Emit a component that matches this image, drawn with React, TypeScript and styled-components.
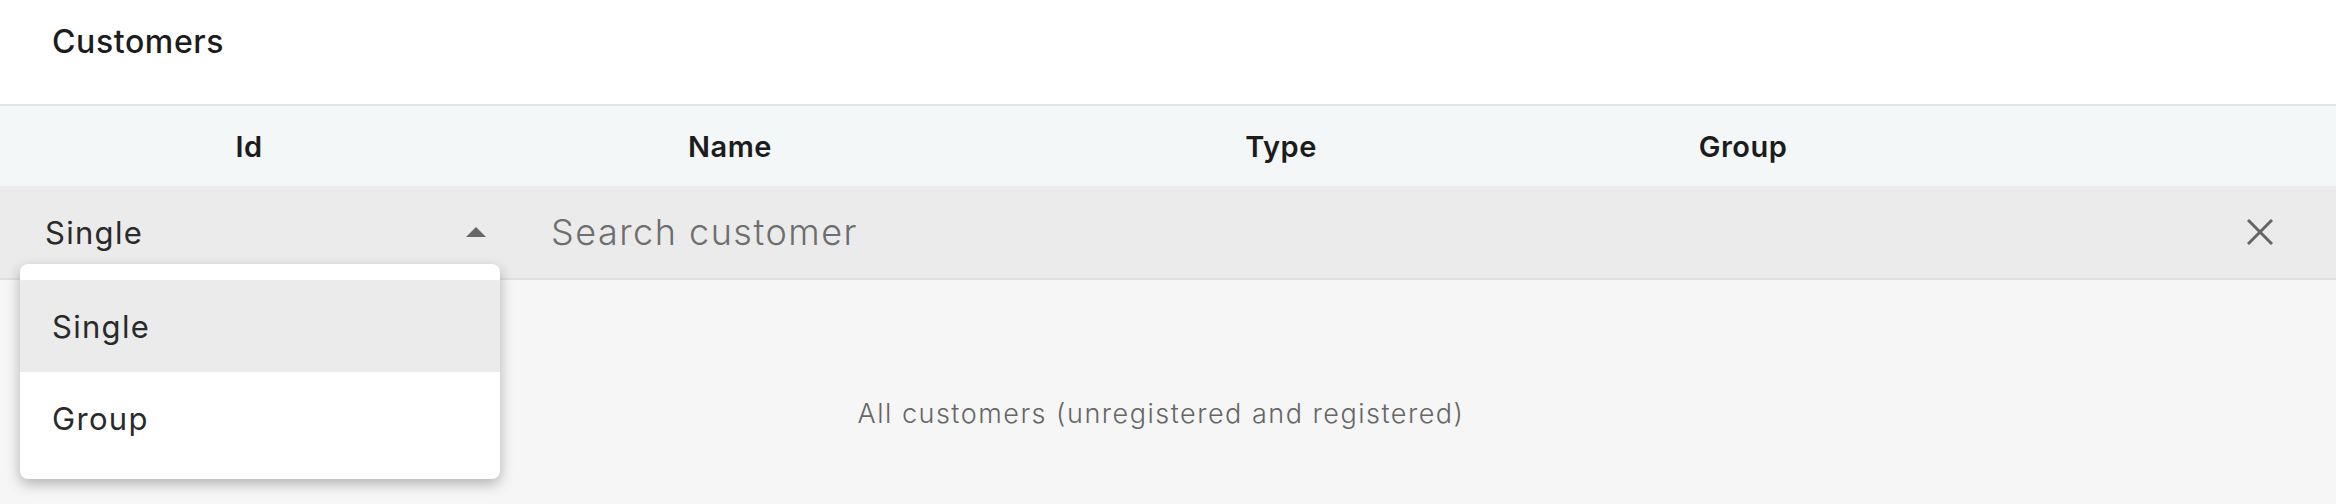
import styled, { createGlobalStyle } from "styled-components";
import { useState } from "react";

const GlobalStyle = createGlobalStyle`
  html, body {
    margin: 0;
    padding: 0;
    background: #ffffff;
    font-family: Inter, "Noto Sans", sans-serif;
    color: #1c1c1c;
  }
  * {
    box-sizing: border-box;
  }
`;

const columns = [
  { label: "Id", width: "498px" },
  { label: "Name", width: "464px" },
  { label: "Type", width: "638px" },
  { label: "Group", width: "286px" },
];

const options = ["Single", "Group"];

const App = () => {
  const [kind, setKind] = useState<string>("Single");
  const [open, setOpen] = useState<boolean>(true);
  const [search, setSearch] = useState<string>("");

  return (
    <Page>
      <GlobalStyle />
      <TitleBar>
        <Title>Customers</Title>
      </TitleBar>
      <HeaderRow cols={columns.map((c) => c.width).join(" ") + " 1fr"}>
        {columns.map((c) => (
          <HeaderCell key={c.label}>{c.label}</HeaderCell>
        ))}
        <span />
      </HeaderRow>
      <SearchRow>
        <SelectBox onClick={() => setOpen(!open)}>
          <SelectValue>{kind}</SelectValue>
          <Arrow up={open} />
          {open && (
            <Menu>
              {options.map((o) => (
                <MenuItem
                  key={o}
                  active={o === kind}
                  onClick={(e: any) => {
                    e.stopPropagation();
                    setKind(o);
                    setOpen(false);
                  }}
                >
                  {o}
                </MenuItem>
              ))}
            </Menu>
          )}
        </SelectBox>
        <SearchInput
          placeholder="Search customer"
          value={search}
          onChange={(e: any) => setSearch(e.target.value)}
        />
        <ClearButton onClick={() => setSearch("")}>
          <svg width="26" height="26" viewBox="0 0 26 26">
            <path d="M1 1 L25 25 M25 1 L1 25" stroke="#666666" strokeWidth="3" />
          </svg>
        </ClearButton>
      </SearchRow>
      <Body>
        <EmptyText>All customers (unregistered and registered)</EmptyText>
      </Body>
    </Page>
  );
};

export default App;

const Page = styled.div`
  width: 100%;
  height: 100vh;
  display: flex;
  flex-direction: column;
  overflow: hidden;
`;

const TitleBar = styled.div`
  height: 106px;
  padding: 22px 0 0 52px;
  background: #ffffff;
  border-bottom: 2px solid #e1e5e7;
`;

const Title = styled.h1`
  margin: 0;
  font-size: 32px;
  line-height: 40px;
  font-weight: 500;
  letter-spacing: 0.6px;
  color: #1c1c1c;
`;

const HeaderRow = styled.div<{ cols: string }>`
  display: grid;
  grid-template-columns: ${(p) => p.cols};
  height: 80px;
  align-items: center;
  background: #f3f7f8;
`;

const HeaderCell = styled.div`
  text-align: center;
  font-size: 29px;
  font-weight: 600;
  letter-spacing: 0.5px;
  color: #1c1c1c;
`;

const SearchRow = styled.div`
  display: flex;
  align-items: center;
  height: 94px;
  background: #ebebeb;
  border-bottom: 2px solid #e0e0e0;
  position: relative;
  z-index: 2;
`;

const SelectBox = styled.div`
  position: relative;
  width: 520px;
  height: 100%;
  display: flex;
  align-items: center;
  padding: 0 34px 0 45px;
  cursor: pointer;
`;

const SelectValue = styled.span`
  flex: 1;
  font-size: 31px;
  letter-spacing: 1.3px;
  color: #2a2a2a;
`;

const Arrow = styled.span<{ up: boolean }>`
  width: 0;
  height: 0;
  border-left: 10px solid transparent;
  border-right: 10px solid transparent;
  ${(p) =>
    p.up ? "border-bottom: 10px solid #666;" : "border-top: 10px solid #666;"}
`;

const Menu = styled.div`
  position: absolute;
  top: 78px;
  left: 20px;
  width: 480px;
  padding: 16px 0 15px;
  background: #ffffff;
  border-radius: 8px;
  box-shadow: 0 5px 14px rgba(0, 0, 0, 0.28);
`;

const MenuItem = styled.div<{ active: boolean }>`
  height: 92px;
  display: flex;
  align-items: center;
  padding-left: 32px;
  font-size: 31px;
  letter-spacing: 1.3px;
  color: #2a2a2a;
  background: ${(p) => (p.active ? "#ebebeb" : "#ffffff")};
`;

const SearchInput = styled.input`
  flex: 1;
  height: 100%;
  border: none;
  outline: none;
  background: transparent;
  padding: 0 0 0 31px;
  font-family: Inter, "Noto Sans", sans-serif;
  font-size: 36px;
  font-weight: 300;
  letter-spacing: 1.5px;
  color: #333;
  &::placeholder {
    color: #6e6e6e;
  }
`;

const ClearButton = styled.button`
  width: 60px;
  height: 60px;
  margin-right: 46px;
  border: none;
  background: transparent;
  display: flex;
  align-items: center;
  justify-content: center;
  padding: 0;
  cursor: pointer;
`;

const Body = styled.div`
  flex: 1;
  background: #f6f6f6;
  display: flex;
  justify-content: center;
  padding: 117px 14px 0 0;
`;

const EmptyText = styled.div`
  font-size: 27px;
  line-height: 34px;
  font-weight: 300;
  letter-spacing: 1.5px;
  color: #666666;
`;
